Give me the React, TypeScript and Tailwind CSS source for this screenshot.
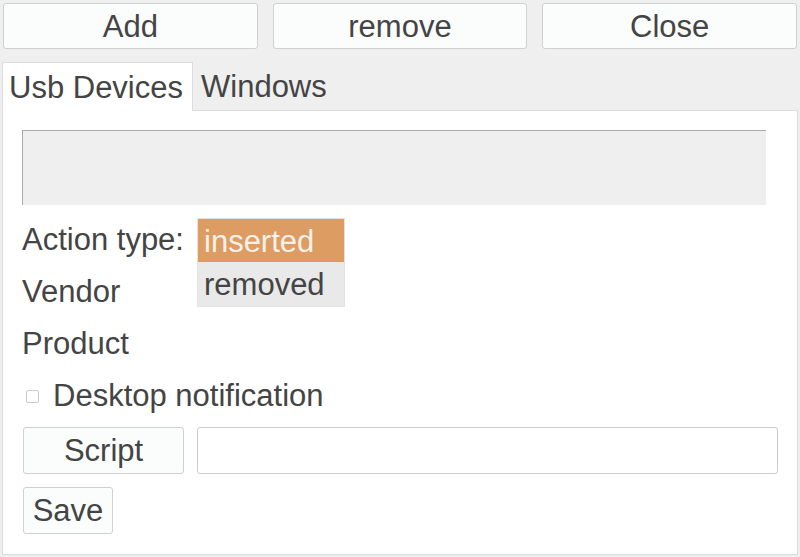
import React, { useState } from 'react';

const btn = 'bg-[#fbfcfc] border border-[#d0d0d0] rounded-[3px] text-[31px] leading-none text-[#444]';

const App = () => {
  const [tab, setTab] = useState<'usb' | 'windows'>('usb');
  const [action, setAction] = useState<'inserted' | 'removed'>('inserted');
  const [notify, setNotify] = useState(false);
  return <div className="w-[800px] h-[557px] bg-[#efefef] text-[#444] overflow-hidden" style={{ fontFamily: '"Liberation Sans", Arial, sans-serif' }}>
      <div className="grid grid-cols-3 gap-[15px] pl-[3px] pr-[3px] pt-[3px]">
        <button className={`${btn} h-[46px]`}>Add</button>
        <button className={`${btn} h-[46px]`}>remove</button>
        <button className={`${btn} h-[46px]`}>Close</button>
      </div>
      <div className="flex pl-[2px] mt-[13px] relative z-10 -mb-px">
        {[{ id: 'usb', name: 'Usb Devices' }, { id: 'windows', name: 'Windows' }].map(t => <button key={t.id} onClick={() => setTab(t.id as any)} className={`h-[49px] text-[31px] leading-[50px] text-left ${tab === t.id ? 'bg-white border border-[#ddd] border-b-0 w-[191px] pl-[6px]' : 'pl-[8px] pr-[8px]'}`}>
            {t.name}
          </button>)}
      </div>
      <div className="mx-[2px] bg-white border border-[#ddd] pt-[19px] pl-[19px] pb-[20px]">
        <div className="w-[744px] h-[75px] bg-[#efefef] border-t border-l border-[#aaa]" />
        <div className="flex mt-[9px]">
          <div className="w-[175px] text-[31px] leading-[52px]">
            <div>Action type:</div>
            <div>Vendor</div>
            <div>Product</div>
          </div>
          <div className="mt-[4px] w-[148px] h-[89px] border border-[#e2e2e2] bg-[#e9e9e9] text-[31px]">
            {(['inserted', 'removed'] as const).map(a => <div key={a} onClick={() => setAction(a)} className={`h-[43px] leading-[45px] pl-[6px] ${action === a ? 'bg-[#dd9c61] text-[#f6f0ea]' : 'text-[#444]'}`}>
                {a}
              </div>)}
          </div>
        </div>
        <label className="flex items-center h-[52px] text-[31px]">
          <input type="checkbox" checked={notify} onChange={e => setNotify(e.target.checked)} className="appearance-none w-[13px] h-[13px] border border-[#ccc] rounded-[2px] bg-white ml-[4px] mr-[14px] checked:bg-[#dd9c61]" />
          Desktop notification
        </label>
        <div className="flex items-center mt-[5px] ml-px">
          <button className={`${btn} w-[161px] h-[47px] rounded-[2px]`}>Script</button>
          <input className="ml-[13px] w-[581px] h-[47px] border border-[#ccc] rounded-[3px] bg-white px-2 text-[24px] outline-none" />
        </div>
        <button className={`${btn} mt-[13px] ml-px w-[90px] h-[47px] rounded-[2px]`}>Save</button>
      </div>
    </div>;
};

export default App;
